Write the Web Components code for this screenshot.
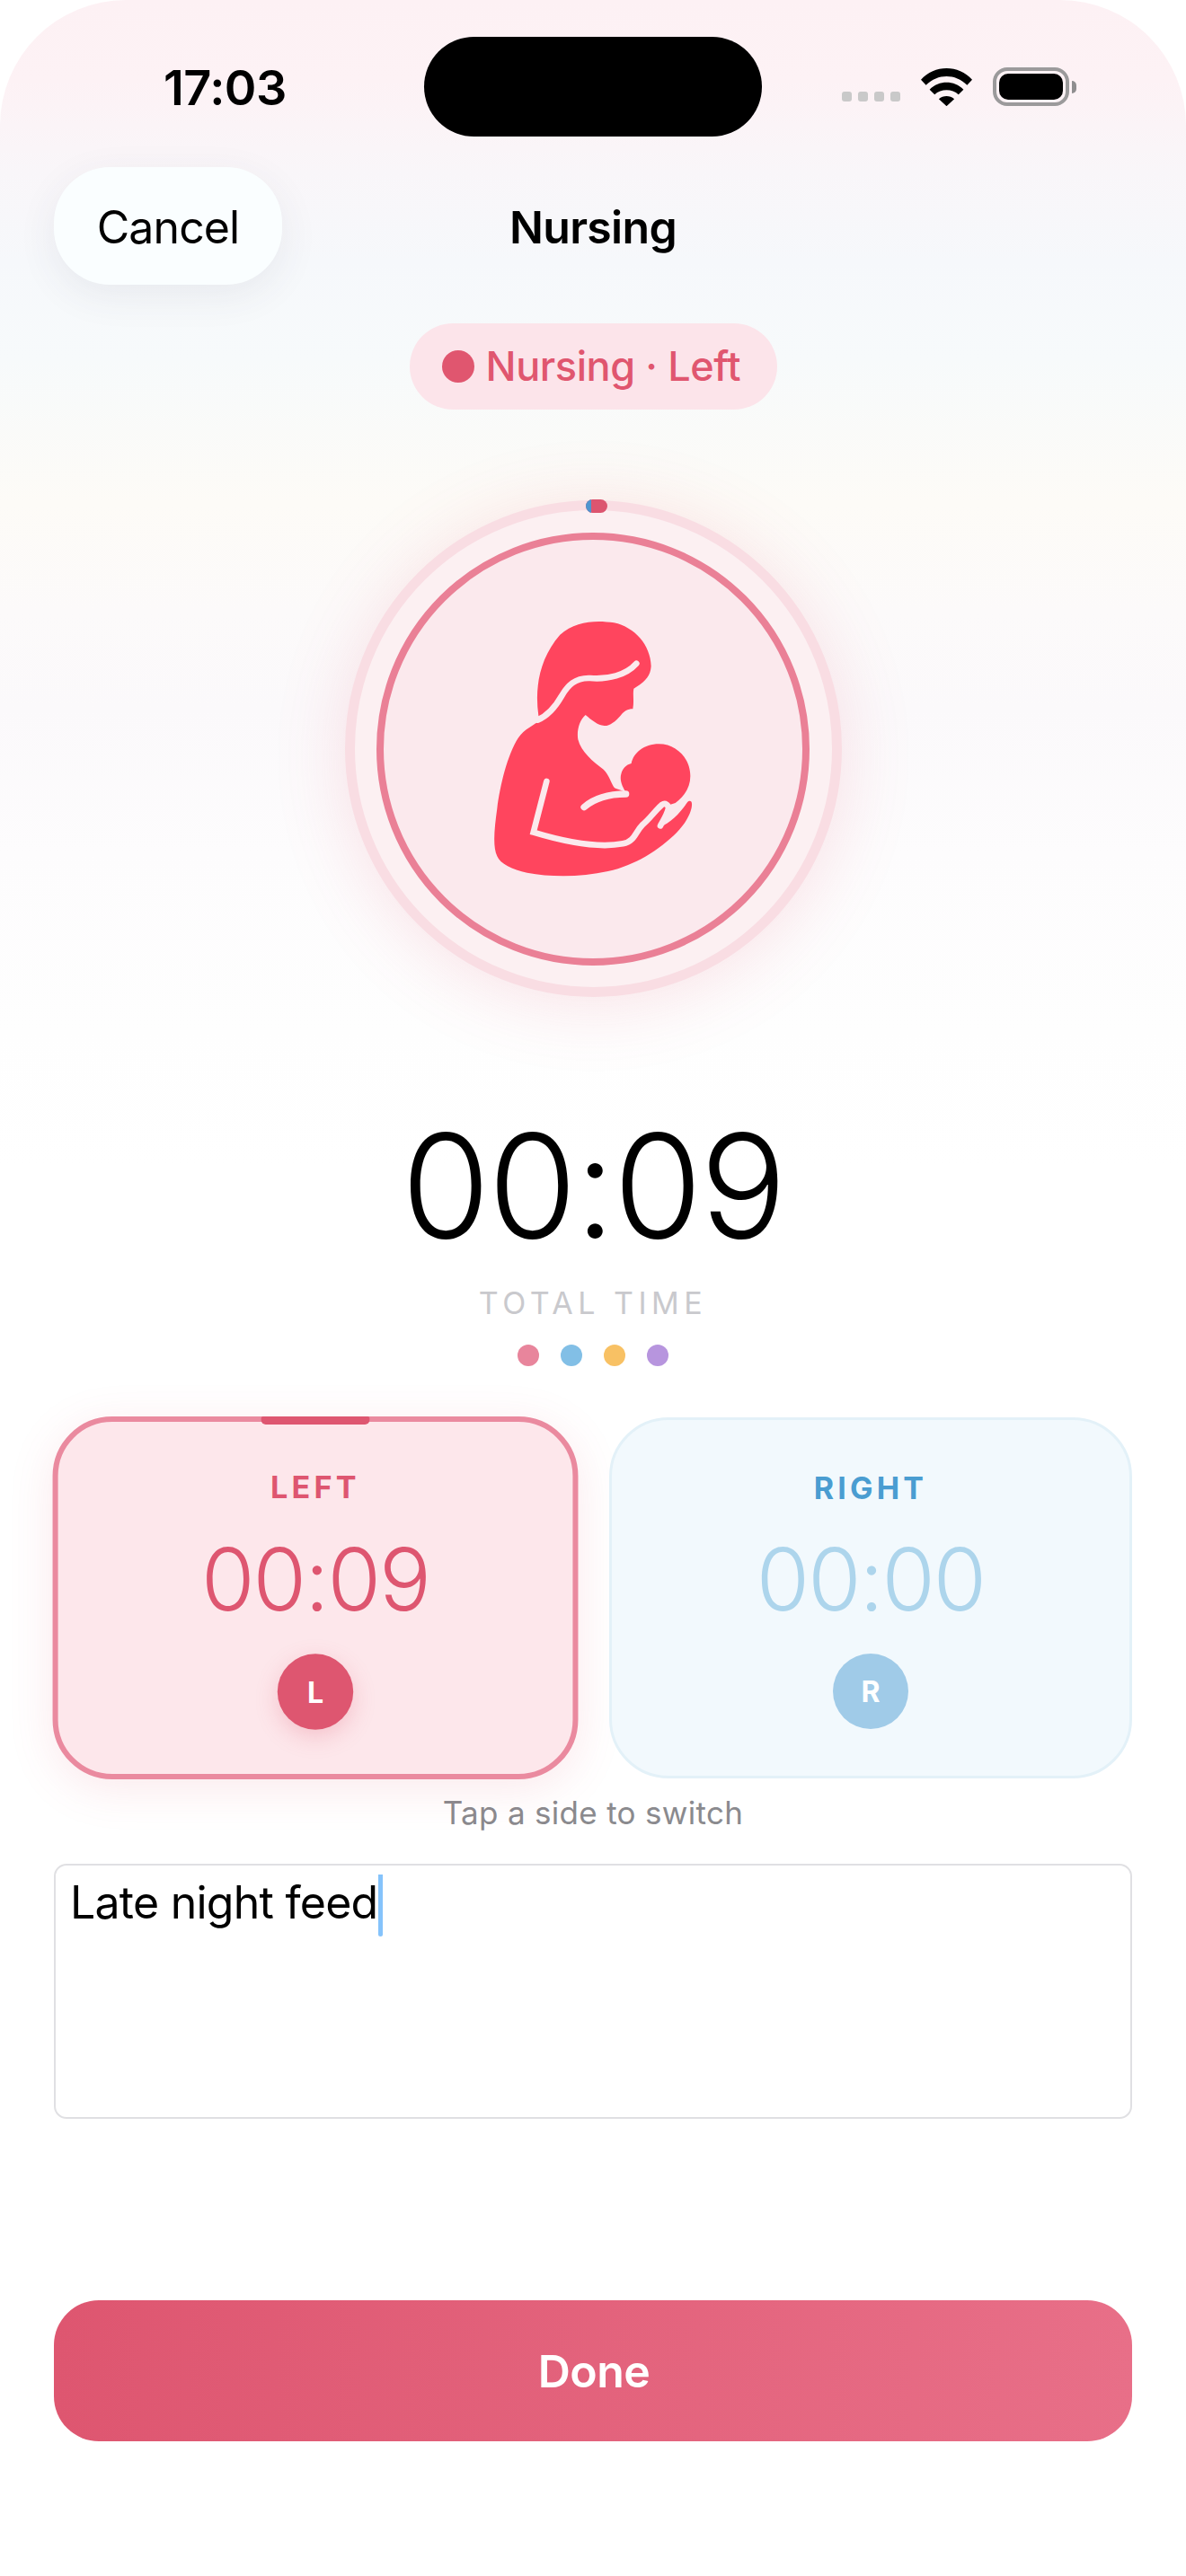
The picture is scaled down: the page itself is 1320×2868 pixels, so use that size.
<!DOCTYPE html>
<html lang="en"><head><meta charset="utf-8"><title>Nursing</title>
<style>html,body{margin:0;padding:0;background:#fff}body{font-family:Inter,"Liberation Sans",sans-serif}</style>
</head><body>
<phone-screen>
  <status-bar></status-bar>
  <nav-bar></nav-bar>
  <state-pill>Nursing · Left</state-pill>
  <feed-ring></feed-ring>
  <total-timer></total-timer>
  <div style="display:grid;grid-template-columns:1fr 1fr;gap:36px;padding:0 60px;margin-top:57px">
    <side-card side="left" label="LEFT" time="00:09" letter="L"></side-card>
    <side-card side="right" label="RIGHT" time="00:00" letter="R"></side-card>
  </div>
  <hint-text>Tap a side to switch</hint-text>
  <note-field>Late night feed</note-field>
  <done-button>Done</done-button>
</phone-screen>
<script>
function def(name,html){customElements.define(name,class extends HTMLElement{constructor(){super();const s=this.attachShadow({mode:'open'});s.innerHTML=typeof html==='function'?html(this):html;}})}
def('phone-screen',`<style>:host{display:block;width:1320px;height:2868px;border-radius:140px 140px 0 0;overflow:hidden;font-family:Inter,"Liberation Sans",sans-serif;
background:linear-gradient(180deg,#fdf1f4 0,#fdf2f5 90px,#f9f6f9 190px,#f6f8fb 290px,#f7fafb 400px,#fdfbf7 560px,#fcfafa 680px,#fbf9fb 790px,#fdfcfd 950px,#fefefe 1150px,#fff 1300px)}</style><slot></slot>`);
def('status-bar',`<style>:host{display:grid;grid-template-columns:472px 376px 472px;height:111px;padding-top:41px;align-items:center}
.t{font-size:54px;font-weight:600;color:#000;padding-left:182px;letter-spacing:-.5px;line-height:113px;height:111px}
.i{height:111px;background:#000;border-radius:56px}
.r{display:flex;align-items:center;padding-left:89px;height:111px}
.sig{display:flex;gap:7px;margin-top:22px;width:65px}.sig b{width:11px;height:11px;border-radius:3px;background:#c9c9c9}
svg{display:block}.wifi{margin-left:23px}
.bat{margin-left:23px;width:85px;height:43px;box-sizing:border-box;border:4px solid #9b9a9b;border-radius:16px;padding:3px}
.bat i{display:block;height:100%;background:#000;border-radius:10px}
.nub{width:5px;height:14px;background:#8f8e8f;border-radius:0 5px 5px 0;margin-left:3px}</style>
<div class="t">17:03</div><div class="i"></div>
<div class="r"><div class="sig"><b></b><b></b><b></b><b></b></div>
<svg class="wifi" width="57" height="42" viewBox="375 75 172 126"><path fill="#000" d="M375,113C420,62 502,62 547,113L530,131C490,92 432,92 392,131ZM404,146C436,114 486,114 518,146L501,163C480,143 442,143 421,163ZM435,178C450,165 472,165 487,178L461,202Z"/></svg>
<div class="bat"><i></i></div><div class="nub"></div></div>`);
def('nav-bar',`<style>:host{display:grid;grid-template-columns:1fr auto 1fr;align-items:center;padding:0 60px;margin-top:34px;height:131px}
.c{justify-self:start;width:254px;height:131px;box-sizing:border-box;padding-top:3px;border-radius:62px;background:#fafeff;box-shadow:0 12px 44px rgba(60,70,90,.08);display:flex;align-items:center;justify-content:center;font-size:50px;color:#000;letter-spacing:-.9px}
.h{font-size:50px;font-weight:600;color:#000;letter-spacing:-.7px;padding-top:3px}</style><div class="c">Cancel</div><div class="h">Nursing</div><div></div>`);
def('state-pill',`<style>:host{display:flex;justify-content:center;margin-top:43px}
.p{width:409px;height:96px;box-sizing:border-box;padding-left:36px;border-radius:48px;background:#fce4ea;display:flex;align-items:center;gap:13px;color:#e0566f;font-size:45px;letter-spacing:-.4px;font-weight:450}
.d{width:36px;height:36px;border-radius:50%;background:#e0566f}
.x{padding-bottom:2px}</style><div class="p"><span class="d"></span><span class="x"><slot></slot></span></div>`);
def('feed-ring',`<style>:host{display:flex;justify-content:center;margin-top:101px}
.o{position:relative;width:553px;height:553px;box-sizing:border-box;border:11px solid #f9dde3;border-radius:50%;background:#fcf0f2;display:flex;align-items:center;justify-content:center;box-shadow:0 8px 80px rgba(224,86,111,.17)}
.n{width:482px;height:482px;box-sizing:border-box;border:8px solid #ea8096;border-radius:50%;background:#fbe9ed;display:flex;align-items:center;justify-content:center}
.cap{position:absolute;left:257px;top:-12px;width:24px;height:15px;border-radius:8px;overflow:hidden;background:#dc5570}
.cap i{display:block;width:6px;height:100%;background:#4f94cf}
svg{display:block;margin:0 0 17px 0}</style>
<div class="o"><div class="cap"><i></i></div><div class="n">
<svg width="280" height="330" viewBox="0 0 840 990"><path fill="#ff455e" d="M238,410C225,320 240,220 310,140C360,95 430,90 490,100C560,115 612,175 614,245C612,280 590,300 556,320C552,340 558,360 553,388C535,388 525,395 512,410C495,430 475,445 458,444C435,442 415,425 395,408C375,425 365,460 370,490C380,530 420,565 455,590C475,610 480,635 492,652C500,655 515,660 532,668C518,650 508,625 514,605C520,585 530,575 548,570C555,535 590,505 640,505C700,505 745,555 745,612C745,650 725,680 695,702L676,708L660,770L640,783C680,770 710,735 735,700C742,692 750,695 750,704C752,725 735,765 700,800C640,860 560,910 470,930C380,950 280,950 200,935C150,925 110,905 100,880C85,850 90,790 100,720C110,640 135,540 170,485C190,455 225,440 245,425Z"/>
<g fill="none" stroke="#fbe9ed" stroke-width="20" stroke-linecap="round"><path d="M565,236C530,275 470,290 410,285C360,283 335,310 315,345C295,380 270,410 235,425"/><path d="M265,630L221,800C320,830 430,855 520,838C560,830 560,800 585,775C610,755 625,730 650,708C662,700 672,710 672,720C668,740 655,760 645,778"/><path d="M390,716C420,690 470,672 530,672" stroke-width="22"/></g></svg>
</div></div>`);
def('total-timer',`<style>:host{display:flex;flex-direction:column;align-items:center;margin-top:130px}
.b{font-size:160px;line-height:160px;font-weight:300;color:#000;letter-spacing:-2.3px;height:160px}
.l{font-size:34px;line-height:42px;color:#c9c9cd;letter-spacing:5.5px;margin-top:30px}
.d{display:flex;gap:24px;margin-top:25px}.d i{width:24px;height:24px;border-radius:50%}</style>
<div class="b">00:09</div><div class="l">TOTAL TIME</div><div class="d"><i style="background:#e8859c"></i><i style="background:#82bfe6"></i><i style="background:#f8c164"></i><i style="background:#b795de"></i></div>`);
def('side-card',h=>{const left=h.getAttribute('side')==='left';const a=h.getAttribute('label'),t=h.getAttribute('time'),k=h.getAttribute('letter');
return `<style>:host{display:block}
.c{position:relative;height:402px;box-sizing:border-box;border-radius:66px;display:flex;flex-direction:column;align-items:center;
${left?'background:#fde7eb;border:6px solid #ea8a9f;transform:scale(1.005);box-shadow:0 10px 50px rgba(224,86,111,.13);':'background:#f2f9fd;border:3px solid #e3f1f8;'}}
.bar{position:absolute;top:-6px;left:50%;margin-left:-60px;width:120px;height:9px;background:#de5670;border-radius:2px 2px 5px 5px}
.l{font-size:34px;line-height:40px;font-weight:700;letter-spacing:4.2px;color:${left?'#de5670':'#4a9dd1'};margin-top:${left?53:56}px}
.t{font-size:96px;line-height:96px;font-weight:300;letter-spacing:-2px;color:${left?'#de5670':'#add5ec'};margin-top:33px}
.k{width:84px;height:84px;border-radius:50%;background:${left?'#de5670':'#a0cbe8'};color:#fff;font-size:32px;font-weight:700;display:flex;align-items:center;justify-content:center;margin-top:35px;${left?'box-shadow:0 8px 24px rgba(222,86,112,.25);':''}}</style>
<div class="c">${left?'<div class="bar"></div>':''}<div class="l">${a}</div><div class="t">${t}</div><div class="k">${k}</div></div>`});
def('hint-text',`<style>:host{display:block;text-align:center;font-size:35px;line-height:44px;color:#8a8a8e;margin-top:16px;letter-spacing:.3px}</style><slot></slot>`);
def('note-field',`<style>:host{display:block;margin:35px 60px 0;height:284px;box-sizing:border-box;border:2.5px solid #e0e0e3;border-radius:14px;background:#fff;padding:0 0 0 16px;font-size:50px;color:#000;letter-spacing:-.75px}
.r{display:flex;align-items:flex-start;padding-top:10px}.x{line-height:63px}.c{width:5px;height:69px;margin-left:1px;background:#85c3fb;border-radius:0 0 3px 3px}</style><div class="r"><span class="x"><slot></slot></span><span class="c"></span></div>`);
def('done-button',`<style>:host{display:flex;align-items:center;justify-content:center;margin:202px 60px 0;height:157px;box-sizing:border-box;padding-left:2px;border-radius:50px;background:linear-gradient(90deg,#de5670,#e86f88);color:#fff;font-size:50px;font-weight:600;letter-spacing:-.6px}</style><slot></slot>`);
</script>
</body></html>
